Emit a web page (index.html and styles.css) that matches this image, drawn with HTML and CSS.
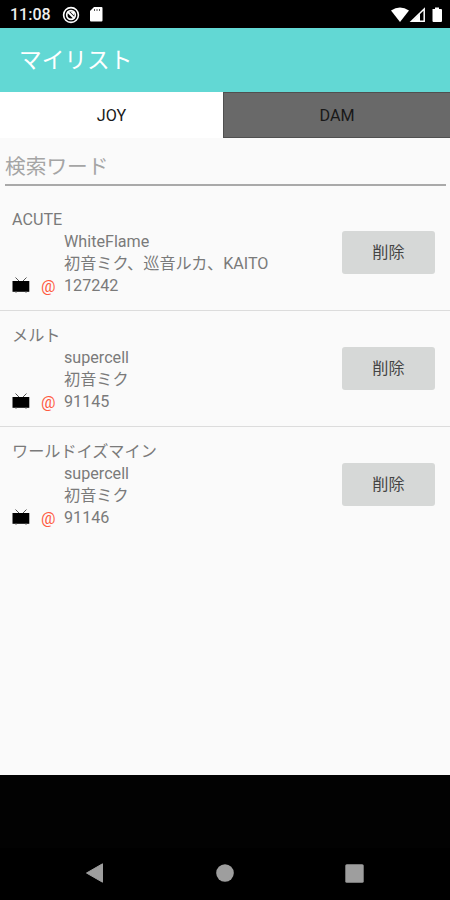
FILE: index.html
```
<!DOCTYPE html>
<html lang="ja">
<head>
<meta charset="utf-8">
<title>マイリスト</title>
<link rel="stylesheet" href="styles.css">
</head>
<body>
<svg class="defs" width="0" height="0" aria-hidden="true">
  <symbol id="tv" viewBox="0 0 18 17">
    <path d="M3.500 .5 7 4M14.500 .5 11 4" stroke="#555" stroke-width="1" fill="none"/>
    <path d="M.5 4h16.800v10.800H.5z"/>
    <path d="M4 14.500v1.500M14 14.500v1.500" stroke="#777" stroke-width="1"/>
  </symbol>
</svg>
<div class="status">
  <span class="clock">11:08</span>
  <svg class="dnd" viewBox="0 0 18 18" width="18" height="18"><g fill="none" stroke="#fff"><circle cx="9" cy="9" r="7.400" stroke-width="1.600"/><circle cx="9" cy="9" r="4.300" stroke-width="1.700"/><path d="M5.500 5.500l7 7" stroke-width="1.900"/></g><path d="M8 5.500h4v4z" fill="#fff"/></svg>
  <svg class="sd" viewBox="0 0 13 15" width="13" height="15"><path d="M4 0h7.500q1 0 1 1v12.500q0 1-1 1H1q-1 0-1-1V4z" fill="#fff"/><path d="M4.500 2v2M7 2v2M9.500 2v2" stroke="#555" stroke-width="1"/></svg>
  <svg class="signals" viewBox="0 0 52 16" width="52" height="16"><path d="M0 3.500Q9 -2.500 18 3.500L9 15z" fill="#fff"/><path d="M20.500 14.200 33.200 2v12.200z" fill="none" stroke="#fff" stroke-width="1.500"/><path d="M21 14.500 29 6.500v8z" fill="#fff"/><path d="M41.500 2h2.500V.5h4V2h2q1 0 1 1v11q0 1-1 1h-7.500q-1 0-1-1z" fill="#fff"/></svg>
</div>
<header class="bar"><h1>マイリスト</h1></header>
<nav class="tabs"><div class="tab active">JOY</div><div class="tab">DAM</div></nav>
<main>
  <div class="search"><div class="field">検索ワード</div></div>
  <section class="song">
    <div class="info">
      <div class="title">ACUTE</div>
      <div class="line">WhiteFlame</div>
      <div class="line">初音ミク、巡音ルカ、KAITO</div>
      <div class="number"><svg class="tv"><use href="#tv"/></svg><span class="at">@</span>127242</div>
    </div>
    <button>削除</button>
  </section>
  <section class="song">
    <div class="info">
      <div class="title">メルト</div>
      <div class="line">supercell</div>
      <div class="line">初音ミク</div>
      <div class="number"><svg class="tv"><use href="#tv"/></svg><span class="at">@</span>91145</div>
    </div>
    <button>削除</button>
  </section>
  <section class="song">
    <div class="info">
      <div class="title">ワールドイズマイン</div>
      <div class="line">supercell</div>
      <div class="line">初音ミク</div>
      <div class="number"><svg class="tv"><use href="#tv"/></svg><span class="at">@</span>91146</div>
    </div>
    <button>削除</button>
  </section>
</main>
<div class="ad"></div>
<footer class="nav">
  <svg viewBox="0 0 18 20" width="18" height="20"><path d="M.5 10 16.500.8V19.200z" fill="#9e9e9e" stroke="#9e9e9e" stroke-linejoin="round"/></svg>
  <svg viewBox="0 0 18 18" width="18" height="18"><circle cx="9" cy="9" r="8.800" fill="#9e9e9e"/></svg>
  <svg viewBox="0 0 19 19" width="19" height="19"><rect x=".3" y=".3" width="18.400" height="18.400" rx="1.500" fill="#9e9e9e"/></svg>
</footer>
</body>
</html>
```
FILE: styles.css
```
* { box-sizing: border-box; }
body {
  margin: 0;
  width: 450px;
  height: 900px;
  display: flex;
  flex-direction: column;
  overflow: hidden;
  background: #000;
  color: #7a7a7a;
  font: 16.15px/22px Roboto, "Noto Sans CJK JP", sans-serif;
}
.defs { position: absolute; }
.status {
  height: 28px;
  flex: none;
  display: flex;
  align-items: center;
  padding: 1px 7px 0 10px;
  color: #eee;
}
.clock { width: 52px; font-weight: 500; font-size: 16px; padding-top: 1px; }
.sd { margin-left: 10px; }
.signals { margin-left: auto; }
.bar {
  height: 64px;
  flex: none;
  display: flex;
  align-items: center;
  padding: 2px 19px 0;
  background: #62d8d4;
  color: #fff;
}
h1 { margin: 0; font-size: 22.7px; font-weight: 400; line-height: 30px; }
.tabs { height: 46px; flex: none; display: flex; background: #fafafa; }
.tab {
  flex: 1;
  display: flex;
  align-items: center;
  justify-content: center;
  padding-top: 2px;
  background: #696969;
  color: #181818;
  border: 1px solid #505050;
  border-right: 0;
}
.tab.active { flex: 0 0 223px; background: #fff; border: 0; }
main { height: 637px; flex: none; background: #fafafa; }
.search { height: 57px; padding: 12px 4px 9px 5px; }
.field {
  height: 36px;
  border-bottom: 2px solid #a9a9a9;
  color: #a5a5a5;
  font-size: 20.7px;
  line-height: 35px;
}
.song {
  height: 116px;
  display: flex;
  justify-content: space-between;
  align-items: flex-start;
  padding: 14px 15px 0 12px;
  border-bottom: 1px solid #dcdcdc;
}
.song:last-child { border-bottom: 0; }
.line { padding-left: 52px; }
.number { display: flex; align-items: center; height: 22px; }
.tv { width: 18px; height: 17px; margin: -2px 11px 0 0; }
.at { width: 23px; color: #ff5a42; padding-top: 1px; }
button {
  width: 93px;
  height: 43px;
  margin: 22px 0 0;
  padding: 1px 0 0;
  border: 0;
  border-radius: 3px;
  background: #d6d8d7;
  color: #444;
  font: 16.15px/22px Roboto, "Noto Sans CJK JP", sans-serif;
}
.ad { height: 73px; flex: none; background: #020202; }
.nav {
  flex: 1;
  display: flex;
  align-items: center;
  justify-content: space-between;
  padding: 0 86px 2px;
}
```
